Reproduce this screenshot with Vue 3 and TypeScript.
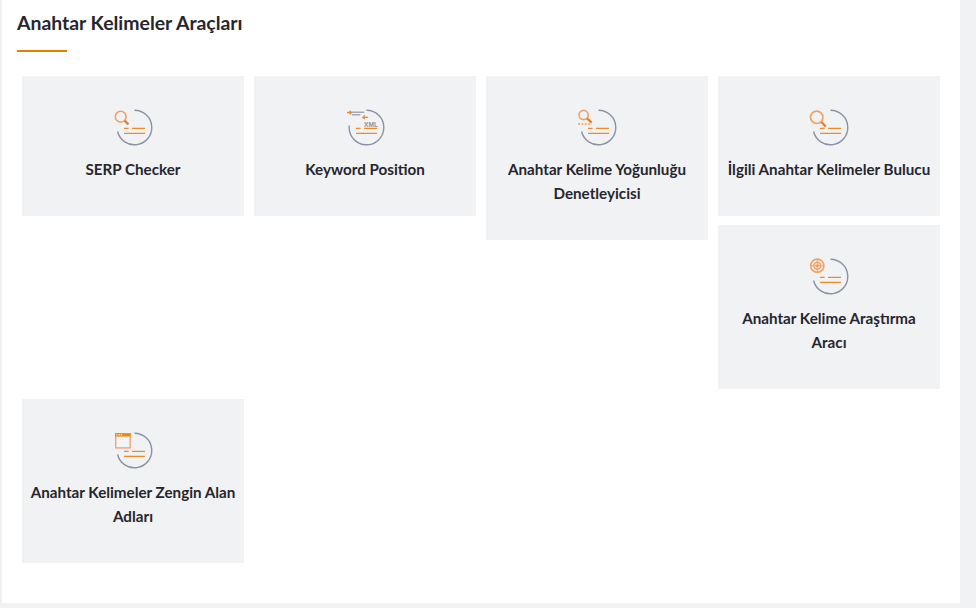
<script setup lang="ts">
interface Tool {
  title: string
  icon: 'serp' | 'xml' | 'density' | 'related' | 'research' | 'domain'
}

const tools: Tool[] = [
  { title: 'SERP Checker', icon: 'serp' },
  { title: 'Keyword Position', icon: 'xml' },
  { title: 'Anahtar Kelime Yoğunluğu Denetleyicisi', icon: 'density' },
  { title: 'İlgili Anahtar Kelimeler Bulucu', icon: 'related' },
  { title: 'Anahtar Kelime Araştırma Aracı', icon: 'research' },
  { title: 'Anahtar Kelimeler Zengin Alan Adları', icon: 'domain' }
]
</script>

<template>
  <div class="page">
    <section class="panel">
      <h2 class="heading">Anahtar Kelimeler Araçları</h2>
      <div class="tools">
        <a v-for="tool in tools" :key="tool.title" class="tool" href="#">
          <svg class="icon" viewBox="0 0 40 40" width="40" height="40" fill="none">
            <path v-if="tool.icon === 'xml'" class="ring" d="M21.5 4.2A17.3 17.3 0 1 1 4.3 19.5" />
            <path v-else class="ring" d="M21.5 4.2A17.3 17.3 0 1 1 4.6 25.5" />
            <path class="rule" d="M11 22.3h4.6M19 22.3h13M11 27.3h21" />
            <template v-if="tool.icon === 'serp'">
              <circle class="glass" cx="7.7" cy="10.7" r="5.4" />
              <path class="handle" d="M11.6 14.6l3.8 3.8" />
            </template>
            <template v-else-if="tool.icon === 'xml'">
              <path class="arrow" d="M2 6.5h4.5M4.6 4.8l2 1.7-2 1.7" />
              <path class="lines" d="M6.8 6.3h12.5M6.8 8.8h8.5" />
              <path class="arrow" d="M23 11.3h-5M19.9 9.6l-2 1.7 2 1.7" />
              <text class="xml" x="19" y="20.6">XML</text>
            </template>
            <template v-else-if="tool.icon === 'density'">
              <circle class="glass" cx="6.6" cy="9" r="4.6" />
              <path class="handle" d="M10 12.4l4.6 4.2" />
              <path class="dash" d="M1 18h14" />
            </template>
            <template v-else-if="tool.icon === 'related'">
              <circle class="glass" cx="7.7" cy="11.3" r="6.2" />
              <path class="handle" d="M12.4 16l4.4 4.6" />
            </template>
            <template v-else-if="tool.icon === 'research'">
              <circle class="glass" cx="8.3" cy="10.7" r="6.6" />
              <circle class="glass" cx="8.3" cy="10.7" r="3.4" />
              <circle class="dot" cx="8.3" cy="10.7" r="1.5" />
              <path class="cross" d="M1.5 10.7h13.6M8.3 3.9v13.6" />
            </template>
            <template v-else>
              <rect class="window" x="2.7" y="4.7" width="14.4" height="14.2" />
              <rect class="window-bar" x="2" y="4" width="15.8" height="3.6" />
              <path class="window-dots" d="M3.4 5.8h1.2M5.6 5.8h1.2M7.8 5.8h1.2" />
            </template>
          </svg>
          <span class="label">{{ tool.title }}</span>
        </a>
      </div>
    </section>
  </div>
</template>

<style>
html,
body {
  margin: 0;
  background: #f1f2f4;
}
</style>

<style scoped>
.page {
  width: 976px;
  height: 608px;
  overflow: hidden;
  padding-left: 2px;
  box-sizing: border-box;
}

.panel {
  width: 958px;
  height: 603px;
  box-sizing: border-box;
  padding: 0 15px;
  background: #fff;
  font-family: Lato, "Noto Sans", sans-serif;
}

.heading {
  position: relative;
  margin: 0;
  padding-top: 11px;
  height: 41px;
  line-height: 24px;
  font-size: 19.4px;
  font-weight: 700;
  color: #26262e;
}

.heading::after {
  content: "";
  position: absolute;
  left: 0;
  top: 50px;
  width: 50px;
  height: 2px;
  background: #e67e00;
}

.tools {
  padding-top: 24px;
  width: 928px;
}

.tool {
  float: left;
  width: 222px;
  margin: 0 5px 9.4px;
  padding: 30px 7px 35px;
  box-sizing: border-box;
  background: #f1f2f4;
  text-align: center;
  text-decoration: none;
}

.icon {
  display: block;
  margin: 0 auto 11px;
}

.label {
  display: block;
  line-height: 24px;
  font-size: 15.2px;
  font-weight: 700;
  color: #26262e;
}

.ring {
  stroke: #8a93a6;
  stroke-width: 1.4;
}

.rule {
  stroke: #ee8a2c;
  stroke-width: 1.2;
}

.glass {
  stroke: #f2a066;
  stroke-width: 1.6;
}

.handle {
  stroke: #e67e22;
  stroke-width: 2.2;
}

.arrow {
  stroke: #ee8a2c;
  stroke-width: 1.3;
}

.lines {
  stroke: #a4a9b4;
  stroke-width: 1.5;
}

.dash {
  stroke: #f2a066;
  stroke-width: 1.3;
  stroke-dasharray: 2 1.4;
}

.cross {
  stroke: #f2a066;
  stroke-width: 0.9;
}

.dot {
  fill: #ee8a2c;
}

.xml {
  font-size: 6.6px;
  font-weight: 700;
  fill: #8f93a0;
  font-family: "Liberation Sans", sans-serif;
}

.window {
  fill: #f4f5f7;
  stroke: #f3a27a;
  stroke-width: 1.4;
}

.window-bar {
  fill: #ee8a1c;
}

.window-dots {
  stroke: #fff;
  stroke-width: 1;
}
</style>
